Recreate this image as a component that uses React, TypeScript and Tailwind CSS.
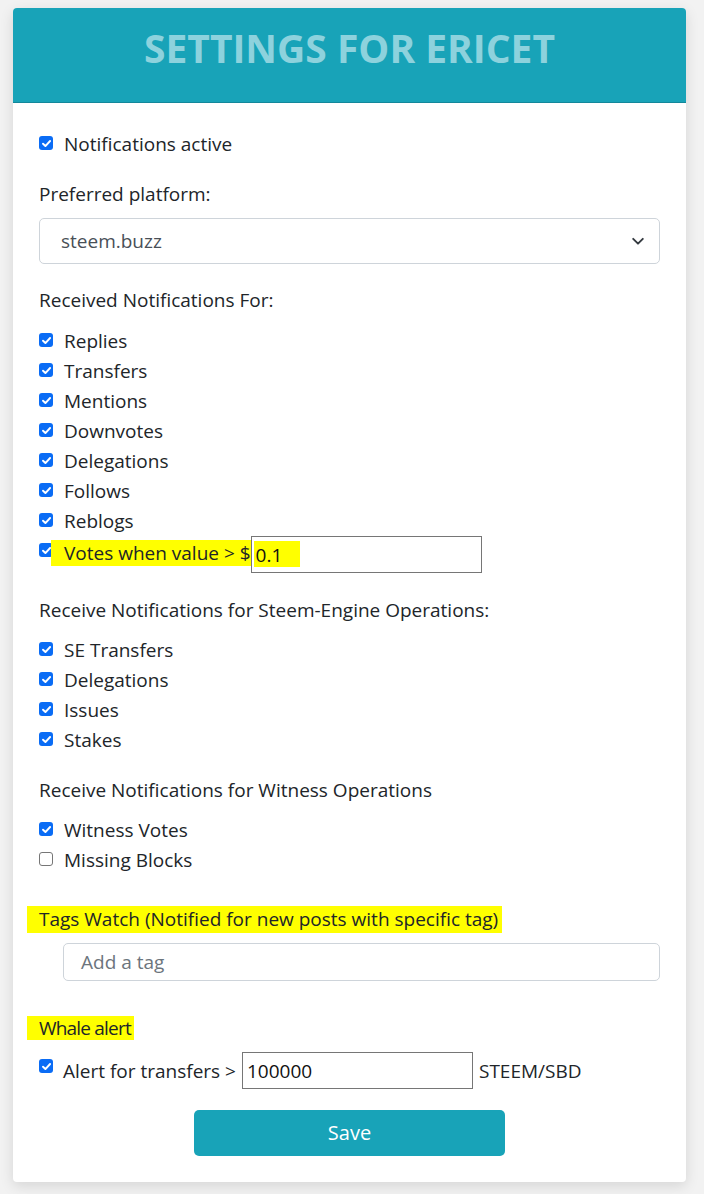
import React from 'react';

function Box({ checked = true }: { checked?: boolean }) {
  if (!checked) {
    return <span className="mt-[7px] block h-[14px] w-[14px] shrink-0 rounded-[3px] border border-[#767676] bg-white" />;
  }
  return (
    <span className="mt-[7px] flex h-[14px] w-[14px] shrink-0 items-center justify-center rounded-[3px] bg-[#0a6cf5]">
      <svg viewBox="0 0 12 12" className="h-[11px] w-[11px]">
        <path d="M2.2 6.3 4.8 8.8 9.9 3.3" fill="none" stroke="white" strokeWidth="2.1" strokeLinecap="round" strokeLinejoin="round" />
      </svg>
    </span>
  );
}

function CheckRow({ label, checked = true }: { label: string; checked?: boolean }) {
  return (
    <div className="flex h-[30px] items-start gap-[11px]">
      <Box checked={checked} />
      <span>{label}</span>
    </div>
  );
}

const received = ['Replies', 'Transfers', 'Mentions', 'Downvotes', 'Delegations', 'Follows', 'Reblogs'];
const engine = ['SE Transfers', 'Delegations', 'Issues', 'Stakes'];

export default function App() {
  return (
    <div className="min-h-screen bg-[#f2f2f2] pt-2 font-['Open_Sans',sans-serif] text-[19px] leading-[30px] text-[#212529]">
      <div className="ml-[13px] w-[673px] rounded-[4px] bg-white shadow-[0_4px_14px_rgba(0,0,0,0.12)]">
        {/* Header */}
        <div className="flex h-[95px] justify-center rounded-t-[4px] border-b border-[#13879a] bg-[#18a3b8] pt-[10px]">
          <h1 className="text-[39px] font-bold leading-[60px] text-[#8dd2dd]">SETTINGS FOR ERICET</h1>
        </div>

        <div className="px-[26px] pb-[26px] pt-[26px]">
          <CheckRow label="Notifications active" />

          <div className="mt-[20px]">Preferred platform:</div>
          <div className="mt-[9px] flex h-[46px] items-center justify-between rounded-[5px] border border-[#ced4da] pl-[21px] pr-[14px] text-[#495057]">
            <span>steem.buzz</span>
            <svg viewBox="0 0 16 16" className="h-[14px] w-[14px]">
              <path d="M2.5 5.5 8 11l5.5-5.5" fill="none" stroke="#343a40" strokeWidth="2.2" strokeLinecap="round" strokeLinejoin="round" />
            </svg>
          </div>

          <div className="mt-[21px]">Received Notifications For:</div>
          <div className="mt-[11px]">
            {received.map((r) => (
              <CheckRow key={r} label={r} />
            ))}
            <div className="flex h-[37px] items-start">
              <Box />
              <span className="mt-[4px] ml-[-2px] bg-[#ffff00] pl-[13px] leading-[26px]">Votes when value &gt; $</span>
              <div className="flex h-[37px] w-[231px] items-center border border-[#767676] bg-white bg-[linear-gradient(#ffff00,#ffff00)] bg-[length:46px_26px] bg-[position:2px_4px] bg-no-repeat pl-[4px] text-[#111]">
                0.1
              </div>
            </div>
          </div>

          <div className="mt-[22px]">Receive Notifications for Steem-Engine Operations:</div>
          <div className="mt-[10px]">
            {engine.map((r) => (
              <CheckRow key={r} label={r} />
            ))}
          </div>

          <div className="mt-[20px]">Receive Notifications for Witness Operations</div>
          <div className="mt-[10px]">
            <CheckRow label="Witness Votes" />
            <CheckRow label="Missing Blocks" checked={false} />
          </div>

          <div className="mt-[31px] flex">
            <span className="ml-[-12px] bg-[#ffff00] pl-[12px] pr-[4px] leading-[27px]">Tags Watch (Notified for new posts with specific tag)</span>
          </div>
          <div className="ml-[24px] mt-[10px] flex h-[38px] items-center rounded-[5px] border border-[#ced4da] pl-[17px] text-[#6c757d]">
            Add a tag
          </div>

          <div className="mt-[35px] flex">
            <span className="ml-[-12px] bg-[#ffff00] pl-[12px] pr-[3px] leading-[24px] tracking-[-0.8px]">Whale alert</span>
          </div>
          <div className="mt-[12px] flex h-[37px] items-start">
            <Box />
            <span className="ml-[10px] mt-[4px] mr-[6px]">Alert for transfers &gt;</span>
            <div className="flex h-[37px] w-[231px] items-center border border-[#767676] pl-[4px] text-[#111]">100000</div>
            <span className="ml-[6px] mt-[4px]">STEEM/SBD</span>
          </div>

          <div className="mt-[21px] flex justify-center">
            <button className="h-[46px] w-[311px] rounded-[5px] bg-[#18a3b8] text-[20px] text-white">Save</button>
          </div>
        </div>
      </div>
    </div>
  );
}
